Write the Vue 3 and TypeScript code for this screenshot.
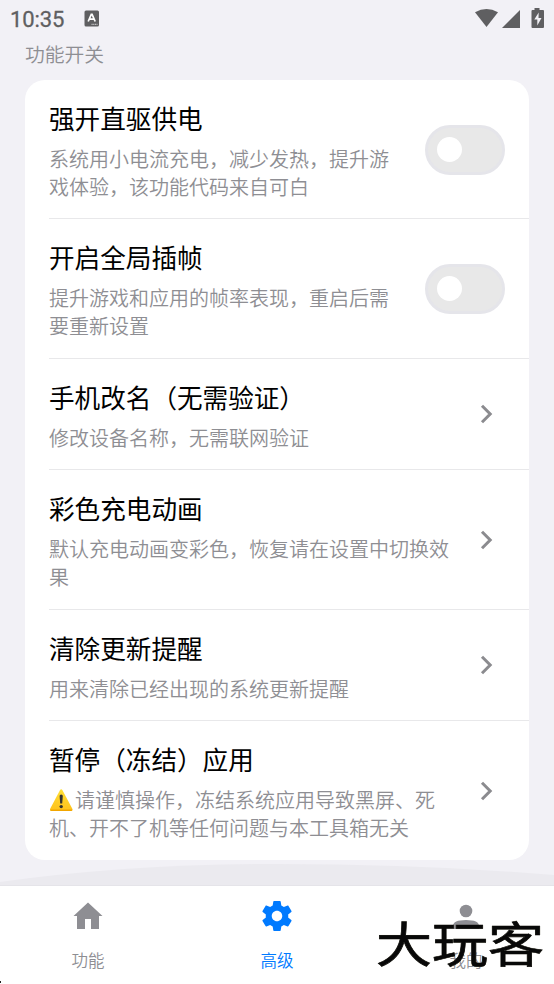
<script setup lang="ts">
interface Option {
  title: string
  lines: string[]
  toggle?: boolean
  warning?: boolean
}

const options: Option[] = [
  { title: '强开直驱供电', lines: ['系统用小电流充电，减少发热，提升游', '戏体验，该功能代码来自可白'], toggle: true },
  { title: '开启全局插帧', lines: ['提升游戏和应用的帧率表现，重启后需', '要重新设置'], toggle: true },
  { title: '手机改名（无需验证）', lines: ['修改设备名称，无需联网验证'] },
  { title: '彩色充电动画', lines: ['默认充电动画变彩色，恢复请在设置中切换效', '果'] },
  { title: '清除更新提醒', lines: ['用来清除已经出现的系统更新提醒'] },
  { title: '暂停（冻结）应用', lines: ['请谨慎操作，冻结系统应用导致黑屏、死', '机、开不了机等任何问题与本工具箱无关'], warning: true },
]
</script>

<template>
  <div class="screen">
    <header class="status">
      <span class="clock">10:35</span>
      <svg class="ime" width="16" height="17" viewBox="0 0 16 17">
        <rect x="0.5" y="0.5" width="14.5" height="16" rx="1.5" fill="#5f5f61" />
        <path d="M4.2 11.5 7.3 4.3h.8l3.1 7.2M5.4 9.2h4.6" fill="none" stroke="#fff" stroke-width="1.7" />
        <path d="M7.5 14.3h6" stroke="#d8d8da" stroke-width="1" stroke-dasharray="1.2 .5" />
      </svg>
      <svg class="signals" width="72" height="22" viewBox="0 0 72 22" fill="#5f5f61">
        <path d="M1 5.2Q12.500-1.200 24 5.200L12.500 20Z" />
        <path d="M46 3V21H28Z" />
        <path d="M60.500 1h5v2h3.500q1 0 1 1v16q0 1-1 1H58.500q-1 0-1-1v-16q0-1 1-1h2z" />
        <path d="M64.700 5.500 60.300 12.500h3v6l4.200-7.500h-3z" fill="#f2f1f6" />
      </svg>
    </header>

    <h2 class="section">功能开关</h2>

    <main class="card">
      <section v-for="item in options" :key="item.title" class="row">
        <div class="copy">
          <h3 class="title">{{ item.title }}</h3>
          <p v-for="(line, i) in item.lines" :key="line" class="desc">
            <svg v-if="item.warning && i === 0" class="warn" width="25" height="24" viewBox="0 0 25 24">
              <defs>
                <linearGradient id="amber" x1="0" y1="0" x2="0" y2="1">
                  <stop offset="0" stop-color="#ffdf35" />
                  <stop offset="1" stop-color="#ffc11c" />
                </linearGradient>
              </defs>
              <path d="M10.800 2.400Q12.200.200 13.600 2.400L23.200 20.500Q24.200 23 22 23H2.500Q.300 23 1.300 20.500Z" fill="url(#amber)" />
              <path d="M1.300 21.500Q1.200 23 2.500 23H22Q23.200 23 23.300 21.500Z" fill="#f2a600" />
              <path d="M10.600 8q0-1.500 1.600-1.500T13.800 8l-.6 7.500h-2z" fill="#35332f" />
              <circle cx="12.200" cy="18.600" r="1.700" fill="#35332f" />
            </svg>{{ line }}
          </p>
        </div>
        <span v-if="item.toggle" class="toggle"><i class="knob"></i></span>
        <svg v-else class="chevron" width="14" height="20" viewBox="0 0 14 20">
          <path d="M2 1.800 10.200 10 2 18.200" fill="none" stroke="#8b8b8f" stroke-width="3" />
        </svg>
      </section>
    </main>

    <svg class="wave" viewBox="0 0 554 26" width="554" height="26">
      <path d="M0 22Q130 4 277 4T554 15V26H0Z" fill="#ebeaef" />
      <path d="M0 25.500H554" stroke="#e5e4e9" />
    </svg>

    <nav class="tabs">
      <a class="tab">
        <svg class="glyph" width="34" height="34" viewBox="0 0 34 34">
          <path d="M17 3.500 31.500 17H28v13H20V20H14V30H6V17H2.500Z" fill="#8e8e93" />
        </svg>
        <span>功能</span>
      </a>
      <a class="tab active">
        <svg class="glyph" width="36" height="36" viewBox="0 0 24 24">
          <path fill="#007aff" d="M19.430 12.980c.04-.32.07-.64.07-.98s-.03-.66-.07-.98l2.110-1.650c.19-.15.24-.42.12-.64l-2-3.460c-.12-.22-.39-.3-.61-.22l-2.490 1c-.52-.4-1.080-.73-1.690-.98l-.38-2.650C14.460 2.180 14.250 2 14 2h-4c-.25 0-.46.18-.49.42l-.38 2.650c-.61.25-1.170.59-1.690.98l-2.490-1c-.23-.09-.49 0-.61.22l-2 3.460c-.13.22-.07.49.12.64l2.110 1.650c-.04.32-.07.65-.07.98s.03.66.07.98l-2.110 1.650c-.19.15-.24.42-.12.64l2 3.460c.12.22.39.3.61.22l2.490-1c.52.4 1.080.73 1.690.98l.38 2.650c.03.24.24.42.49.42h4c.25 0 .46-.18.49-.42l.38-2.650c.61-.25 1.170-.59 1.690-.98l2.490 1c.23.09.49 0 .61-.22l2-3.460c.12-.22.07-.49-.12-.64zM12 15.500c-1.930 0-3.500-1.570-3.500-3.500s1.570-3.500 3.500-3.500 3.500 1.570 3.500 3.500-1.570 3.500-3.500 3.500z" />
        </svg>
        <span>高级</span>
      </a>
      <a class="tab">
        <svg class="glyph" width="34" height="34" viewBox="0 0 34 34" fill="#8e8e93">
          <circle cx="17" cy="12" r="6.300" />
          <path d="M4 30V27Q4 21 17 21T30 27V30Z" />
        </svg>
        <span>我的</span>
      </a>
    </nav>
    <div class="watermark">大玩客</div>
    <i class="speck"></i>
  </div>
</template>

<style>
body {
  margin: 0;
  background: #f2f1f6;
}
</style>

<style scoped>
.screen {
  position: relative;
  width: 554px;
  height: 984px;
  overflow: hidden;
  background: #f2f1f6;
  font-family: "Noto Sans CJK SC", sans-serif;
  display: flex;
  flex-direction: column;
}
.status {
  height: 39px;
  flex: none;
  display: flex;
  align-items: flex-start;
  padding: 0 8px 0 10px;
  box-sizing: border-box;
}
.clock {
  width: 74px;
  font: 400 22px/39px Roboto, sans-serif;
  letter-spacing: -0.1px;
  color: #5f5f61;
  -webkit-text-stroke: 0.3px #5f5f61;
}
.ime { margin-top: 10px; }
.signals { margin: 7px 0 0 auto; }
.section {
  margin: 0 0 0 25px;
  height: 41px;
  flex: none;
  font-size: 19.800px;
  line-height: 29px;
  font-weight: 350;
  color: #8e8e93;
}
.card {
  margin: 0 25px;
  height: 780px;
  flex: none;
  border-radius: 20px;
  background: #fff;
  padding-left: 24px;
  box-sizing: border-box;
}
.row {
  display: flex;
  align-items: center;
  justify-content: space-between;
  padding: 19px 24px 17.450px 0;
  border-bottom: 1px solid #e8e8ea;
}
.row:last-child { border-bottom-color: transparent; }
.copy { width: 402px; white-space: nowrap; }
.title {
  margin: 0 0 8px;
  font-size: 25.600px;
  line-height: 38px;
  font-weight: 400;
  color: #000;
}
.desc {
  margin: 0;
  height: 28px;
  font-size: 20px;
  line-height: 28px;
  font-weight: 350;
  color: #8e8e93;
}
.warn { vertical-align: -4px; margin-right: 1px; }
.toggle {
  width: 80px;
  height: 50px;
  flex: none;
  box-sizing: border-box;
  border: 3px solid #e5e5ea;
  border-radius: 25px;
  background: #e8e8e8;
  display: flex;
  align-items: center;
  padding-left: 9px;
}
.row .toggle { margin-left: -26px; margin-bottom: 1px; }
.knob {
  width: 25px;
  height: 25px;
  border-radius: 50%;
  background: #fff;
}
.chevron { margin-right: 11px; flex: none; margin-bottom: 1px; }
.wave { flex: none; display: block; }
.tabs {
  height: 98px;
  flex: none;
  background: #fff;
  display: flex;
  justify-content: center;
}
.tab {
  width: 189px;
  flex: none;
  display: flex;
  flex-direction: column;
  align-items: center;
  color: #8e8e93;
  font-size: 16.500px;
  line-height: 24px;
  font-weight: 350;
}
.glyph { margin: 13px 0 15px; }
.active .glyph { margin: 12px 0 14px; }
.active { color: #007aff; }
.watermark {
  position: absolute;
  left: 376px;
  top: 902px;
  font-size: 56px;
  line-height: 80px;
  font-weight: 400;
  color: #080808;
  -webkit-text-stroke: 0.8px #080808;
  white-space: nowrap;
  text-shadow: 0 0 1px #c9c59b;
  transform: scaleY(0.85);
}
.speck {
  position: absolute;
  left: 0;
  top: 981px;
  width: 1px;
  height: 2px;
  background: #222;
}
</style>
